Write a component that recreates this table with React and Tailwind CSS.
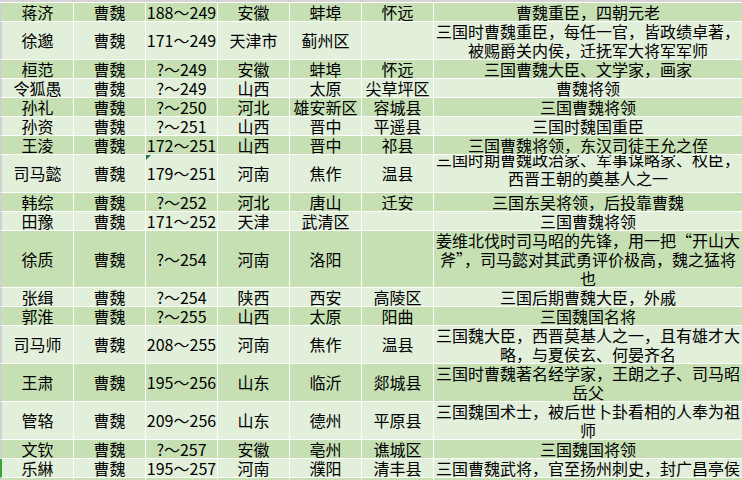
const ROWS = [
  { c: ['蒋济', '曹魏', '188～249', '安徽', '蚌埠', '怀远'], d: ['曹魏重臣，四朝元老'] },
  { c: ['徐邈', '曹魏', '171～249', '天津市', '蓟州区', ''], d: ['三国时曹魏重臣，每任一官，皆政绩卓著，', '被赐爵关内侯，迁抚军大将军军师'], h: 2 },
  { c: ['桓范', '曹魏', '?～249', '安徽', '蚌埠', '怀远'], d: ['三国曹魏大臣、文学家，画家'] },
  { c: ['令狐愚', '曹魏', '?～249', '山西', '太原', '尖草坪区'], d: ['曹魏将领'] },
  { c: ['孙礼', '曹魏', '?～250', '河北', '雄安新区', '容城县'], d: ['三国曹魏将领'] },
  { c: ['孙资', '曹魏', '?～251', '山西', '晋中', '平遥县'], d: ['三国时魏国重臣'] },
  { c: ['王淩', '曹魏', '172～251', '山西', '晋中', '祁县'], d: ['三国曹魏将领，东汉司徒王允之侄'] },
  { c: ['司马懿', '曹魏', '179～251', '河南', '焦作', '温县'], d: ['三国时期曹魏政治家、军事谋略家、权臣，', '西晋王朝的奠基人之一'], h: 2, flag: true, up: true },
  { c: ['韩综', '曹魏', '?～252', '河北', '唐山', '迁安'], d: ['三国东吴将领，后投靠曹魏'] },
  { c: ['田豫', '曹魏', '171～252', '天津', '武清区', ''], d: ['三国曹魏将领'] },
  { c: ['徐质', '曹魏', '?～254', '河南', '洛阳', ''], d: ['姜维北伐时司马昭的先锋，用一把“开山大', '斧”，司马懿对其武勇评价极高，魏之猛将', '也'], h: 3 },
  { c: ['张缉', '曹魏', '?～254', '陕西', '西安', '高陵区'], d: ['三国后期曹魏大臣，外戚'] },
  { c: ['郭淮', '曹魏', '?～255', '山西', '太原', '阳曲'], d: ['三国魏国名将'] },
  { c: ['司马师', '曹魏', '208～255', '河南', '焦作', '温县'], d: ['三国魏大臣，西晋莫基人之一，且有雄才大', '略，与夏侯玄、何晏齐名'], h: 2 },
  { c: ['王肃', '曹魏', '195～256', '山东', '临沂', '郯城县'], d: ['三国时曹魏著名经学家，王朗之子、司马昭', '岳父'], h: 2 },
  { c: ['管辂', '曹魏', '209～256', '山东', '德州', '平原县'], d: ['三国魏国术士，被后世卜卦看相的人奉为祖', '师'], h: 2 },
  { c: ['文钦', '曹魏', '?～257', '安徽', '亳州', '谯城区'], d: ['三国魏国将领'] },
  { c: ['乐綝', '曹魏', '195～257', '河南', '濮阳', '清丰县'], d: ['三国曹魏武将，官至扬州刺史，封广昌亭侯'], sel: true },
  { c: ['', '', '', '', '', ''], d: [''] },
]

const HEIGHTS = { 1: 'h-[19px]', 2: 'h-[38px]', 3: 'h-[57px]' }

function Cell({ bg, children, extra = '' }) {
  return (
    <div className={`${bg} relative overflow-hidden flex flex-col items-center justify-center text-center ${extra}`}>
      {children}
    </div>
  )
}

export default function App() {
  return (
    <div
      className="w-[742px] h-[480px] overflow-hidden bg-white text-black text-[16px] leading-[19px]"
      style={{ fontFamily: '"Noto Sans CJK SC", "Noto Sans", sans-serif' }}
    >
      <div className="h-[2px] bg-[#d4d4d4]" />
      <div className="h-px bg-white" />
      {ROWS.map((r, i) => {
        const bg = i % 2 === 0 ? 'bg-[#c6e0b4]' : 'bg-[#e2efda]'
        return (
          <div
            key={i}
            className={`grid grid-cols-[71px_71px_71px_71px_71px_71px_1fr] gap-x-px border-b border-white border-l-2 ${r.sel ? 'border-l-[#3aa63a]' : 'border-l-[#d0d0d0]'} ${HEIGHTS[r.h || 1]} box-border`}
          >
            {r.c.map((t, j) => (
              <Cell key={j} bg={bg}>
                {r.flag && j === 2 && (
                  <span className="absolute left-0 top-0 w-0 h-0 border-t-[5px] border-t-[#1e7b34] border-r-[5px] border-r-transparent" />
                )}
                <span className="whitespace-nowrap">{t}</span>
              </Cell>
            ))}
            <Cell bg={bg} extra={r.up ? 'pb-[10px]' : ''}>
              {r.d.map((l, k) => (
                <span key={k} className="block whitespace-nowrap shrink-0">{l}</span>
              ))}
            </Cell>
          </div>
        )
      })}
    </div>
  )
}
